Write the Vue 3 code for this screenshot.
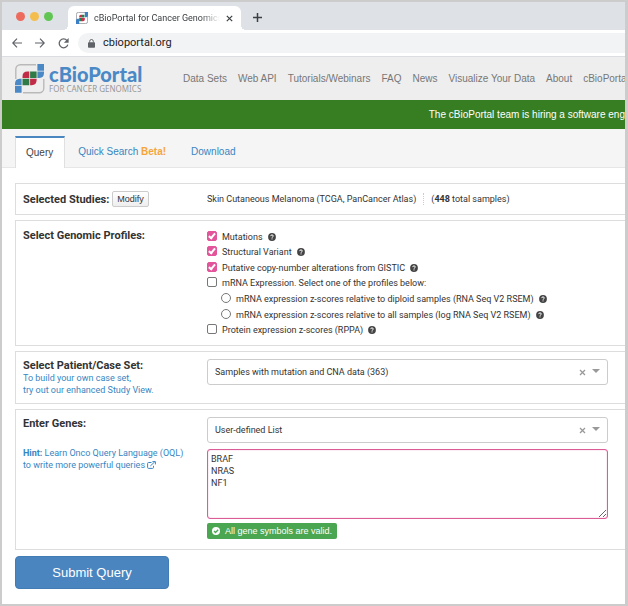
<script setup>
import { ref } from 'vue'

const navLinks = ['Data Sets', 'Web API', 'Tutorials/Webinars', 'FAQ', 'News', 'Visualize Your Data', 'About', 'cBioPortal']

const profiles = ref([
  { id: 'mut', label: 'Mutations', type: 'checkbox', checked: true, help: true },
  { id: 'sv', label: 'Structural Variant', type: 'checkbox', checked: true, help: true },
  { id: 'cna', label: 'Putative copy-number alterations from GISTIC', type: 'checkbox', checked: true, help: true },
  { id: 'mrna', label: 'mRNA Expression. Select one of the profiles below:', type: 'checkbox', checked: false, help: false },
  { id: 'diploid', label: 'mRNA expression z-scores relative to diploid samples (RNA Seq V2 RSEM)', type: 'radio', checked: false, help: true },
  { id: 'all', label: 'mRNA expression z-scores relative to all samples (log RNA Seq V2 RSEM)', type: 'radio', checked: false, help: true },
  { id: 'rppa', label: 'Protein expression z-scores (RPPA)', type: 'checkbox', checked: false, help: true },
])

const caseSet = ref('Samples with mutation and CNA data (363)')
const geneList = ref('User-defined List')
const genes = ref('BRAF\nNRAS\nNF1')
</script>

<template>
  <div class="window">
    <div class="tabstrip">
      <div class="lights"><i class="red"></i><i class="yellow"></i><i class="green"></i></div>
      <div class="browser-tab">
        <svg class="favicon" viewBox="0 0 30 30" aria-hidden="true">
          <rect x="1" y="1" width="28" height="28" rx="5" fill="none" stroke="#8d9196" stroke-width="2" />
          <path d="M22 0h8v9q0 4-4 4h-4zM0 30v-9q0-4 4-4h4v13z" fill="#3b7fc4" />
          <path d="M8 14V11q0-4 4-4h3v7zM15 15h7v4q0 4-4 4h-3z" fill="#c8304a" />
          <path d="M15 7h6v7h-6zM8 15h7v8H8z" fill="#2c7d49" />
        </svg>
        <span class="tab-title">cBioPortal for Cancer Genomics</span>
        <button class="plain" aria-label="Close tab">
          <svg width="7" height="7" viewBox="0 0 7 7"><path d="M.8.8l5.4 5.4M6.2.8L.8 6.2" stroke="#3c4043" stroke-width="1.2" /></svg>
        </button>
      </div>
      <button class="plain new-tab" aria-label="New tab">
        <svg width="9" height="9" viewBox="0 0 9 9"><path d="M4.5 0v9M0 4.5h9" stroke="#3c4043" stroke-width="1.5" /></svg>
      </button>
    </div>

    <div class="toolbar">
      <button class="plain" aria-label="Back">
        <svg width="10" height="10" viewBox="0 0 10 10"><path d="M10 5H1M5 .7L.8 5 5 9.3" fill="none" stroke="#5f6368" stroke-width="1.2" /></svg>
      </button>
      <button class="plain" aria-label="Forward">
        <svg width="10" height="10" viewBox="0 0 10 10"><path d="M0 5h9M5 .7L9.2 5 5 9.3" fill="none" stroke="#5f6368" stroke-width="1.2" /></svg>
      </button>
      <button class="plain" aria-label="Reload">
        <svg width="11" height="11" viewBox="0 0 11 11"><path d="M9 2.6A4.4 4.4 0 1 0 9.8 6.6" fill="none" stroke="#5f6368" stroke-width="1.3" /><path d="M10.6 0v4.7H5.9z" fill="#5f6368" /></svg>
      </button>
      <div class="address">
        <svg width="7" height="9" viewBox="0 0 7 9" aria-hidden="true"><rect y="3.2" width="7" height="5.6" rx=".8" fill="#5f6368" /><path d="M1.7 3.6V2.3a1.8 1.8 0 0 1 3.6 0v1.3" fill="none" stroke="#5f6368" /></svg>
        <span>cbioportal.org</span>
      </div>
    </div>

    <header class="site-header">
      <a class="logo" href="#">
        <svg width="30" height="30" viewBox="0 0 30 30" aria-hidden="true">
          <rect x=".8" y=".8" width="28" height="28" rx="4.5" fill="none" stroke="#b9b9b9" stroke-width="1.4" />
          <path d="M21 0h9v15h-8v8H8v7H0V15h7V7h14z" fill="#eee" />
          <path d="M22.4 0H29v6.8h-6.6zM22.4 7.6H29V9q0 4.8-4.6 5h-2zM0 22v6.8h6.6V22zM0 21.2h6.6v-6.4h-2Q0 15 0 19.8z" fill="#4a89c6" />
          <path d="M7.5 14V12.5q0-4.9 5-4.9H14.3V14zM15.1 14.8h6.5v1.500q0 4.900-5 4.900h-1.500z" fill="#c22b47" />
          <path d="M15.1 7.6h6.5V14h-6.5zM7.5 14.8h6.8v6.4H7.5z" fill="#2f7b48" />
        </svg>
        <span class="logo-text">
          <strong>cBioPortal</strong>
          <small>FOR CANCER GENOMICS</small>
        </span>
      </a>
      <nav>
        <a v-for="link in navLinks" :key="link" href="#">{{ link }}</a>
      </nav>
    </header>

    <div class="banner"><span>The cBioPortal team is hiring a software engineer</span></div>

    <div class="tabs">
      <a class="active" href="#">Query</a>
      <a href="#">Quick Search <b>Beta!</b></a>
      <a href="#">Download</a>
    </div>

    <main>
      <section class="studies">
        <div class="side inline">
          <h2>Selected Studies:</h2>
          <button class="modify">Modify</button>
        </div>
        <div class="content study">
          <span class="study-name">Skin Cutaneous Melanoma (TCGA, PanCancer Atlas)</span>
          <span>(<b>448</b> total samples)</span>
        </div>
      </section>

      <section class="profiles">
        <div class="side"><h2>Select Genomic Profiles:</h2></div>
        <div class="content">
          <div v-for="p in profiles" :key="p.id" class="option" :class="p.type">
            <input :id="p.id" v-model="p.checked" :type="p.type" :value="true" :name="p.type === 'radio' ? 'mrna-profile' : p.id">
            <label :for="p.id">{{ p.label }}</label>
            <svg v-if="p.help" width="8" height="8" viewBox="0 0 8 8" aria-hidden="true">
              <circle cx="4" cy="4" r="3.9" fill="#444" />
              <path d="M2.7 3.1Q2.8 1.9 4 1.9T5.3 3Q5.3 3.6 4.6 3.9 4 4.2 4 4.8M4 5.4v1" fill="none" stroke="#fff" stroke-width="1" />
            </svg>
          </div>
        </div>
      </section>

      <section class="cases">
        <div class="side">
          <h2><label for="case-set">Select Patient/Case Set:</label></h2>
          <a href="#">To build your own case set,<br>try out our enhanced Study View.</a>
        </div>
        <div class="content">
          <div class="dropdown">
            <select id="case-set" v-model="caseSet"><option>Samples with mutation and CNA data (363)</option></select>
            <button class="plain" aria-label="Clear case set">
              <svg width="7" height="7" viewBox="0 0 7 7"><path d="M1 1l5 5M6 1L1 6" stroke="#999" stroke-width="1.3" /></svg>
            </button>
            <svg class="caret" width="8" height="4" viewBox="0 0 8 4" aria-hidden="true"><path d="M0 0h8L4 4z" fill="#999" /></svg>
          </div>
        </div>
      </section>

      <section class="genes">
        <div class="side">
          <h2><label for="genes">Enter Genes:</label></h2>
          <a class="hint" href="#"><b>Hint:</b> Learn Onco Query Language (OQL)<br>to write more powerful queries
            <svg width="9" height="8" viewBox="0 0 9 8" aria-hidden="true"><path d="M4.5 1.5H1.6Q.6 1.5.6 2.5V6.4Q.6 7.4 1.6 7.4H5.5Q6.5 7.4 6.5 6.4V4.8M3.3 5L7.7.9M5.4.6H8.4V3.4" fill="none" stroke="#3786c2" stroke-width="1" /></svg>
          </a>
        </div>
        <div class="content">
          <div class="dropdown">
            <select v-model="geneList" aria-label="Gene list"><option>User-defined List</option></select>
            <button class="plain" aria-label="Clear gene list">
              <svg width="7" height="7" viewBox="0 0 7 7"><path d="M1 1l5 5M6 1L1 6" stroke="#999" stroke-width="1.3" /></svg>
            </button>
            <svg class="caret" width="8" height="4" viewBox="0 0 8 4" aria-hidden="true"><path d="M0 0h8L4 4z" fill="#999" /></svg>
          </div>
          <textarea id="genes" v-model="genes" spellcheck="false"></textarea>
          <div class="valid">
            <svg width="8" height="8" viewBox="0 0 8 8" aria-hidden="true"><circle cx="4" cy="4" r="4" fill="#fff" /><path d="M2 4l1.5 1.5L6.2 2.7" fill="none" stroke="#4aa651" stroke-width="1.3" /></svg>
            <span>All gene symbols are valid.</span>
          </div>
        </div>
      </section>

      <button class="submit">Submit Query</button>
    </main>
  </div>
</template>

<style>
body {
  background: #fff;
}
</style>

<style scoped>
* {
  box-sizing: border-box;
}

.window {
  min-height: 100vh;
  border: 2px solid #ccc;
  border-right-width: 3px;
  overflow: hidden;
  background: #fff;
  color: #333;
  font: 9px/12px Roboto, "Liberation Sans", sans-serif;
  white-space: nowrap;
}

a {
  color: #3786c2;
  text-decoration: none;
}

button,
select,
textarea {
  font-family: inherit;
}

svg {
  flex: none;
}

.plain {
  display: flex;
  padding: 0;
  border: 0;
  background: none;
}

.tabstrip {
  display: flex;
  align-items: flex-end;
  height: 28px;
  background: #dee1e6;
}

.lights {
  display: flex;
  align-items: center;
  gap: 5px;
  height: 28px;
  padding: 0 15px 0 14px;
}

.lights i {
  width: 9px;
  height: 9px;
  border-radius: 50%;
}

.red { background: #ed6a5e; }
.yellow { background: #f4be4f; }
.green { background: #61c554; }

.browser-tab {
  position: relative;
  display: flex;
  align-items: center;
  gap: 6px;
  width: 173px;
  height: 24px;
  padding: 0 8px;
  border-radius: 6px 6px 0 0;
  background: #fff;
}

.browser-tab::before,
.browser-tab::after {
  content: "";
  position: absolute;
  bottom: 0;
  width: 5px;
  height: 5px;
}

.browser-tab::before {
  right: 100%;
  background: radial-gradient(circle at 0 0, transparent 5px, #fff 5px);
}

.browser-tab::after {
  left: 100%;
  background: radial-gradient(circle at 100% 0, transparent 5px, #fff 5px);
}

.favicon {
  width: 12px;
  height: 12px;
}

.tab-title {
  flex: 1;
  overflow: hidden;
  color: #3c4043;
  mask-image: linear-gradient(to right, #000 85%, transparent);
}

.new-tab {
  margin: 0 12px 8px;
}

.toolbar {
  display: flex;
  align-items: center;
  gap: 13px;
  height: 27px;
  padding-left: 10px;
  border-bottom: 1px solid #dcdde0;
}

.address {
  display: flex;
  flex: 1;
  align-items: center;
  gap: 8px;
  height: 20px;
  margin-left: -4px;
  padding-left: 10px;
  border-radius: 10px 0 0 10px;
  background: #f1f3f4;
  color: #202124;
  font-size: 11px;
}

.site-header {
  display: flex;
  align-items: center;
  gap: 40px;
  height: 43px;
  padding-left: 13px;
  background: #eee;
}

.logo {
  display: flex;
  gap: 4px;
}

.logo-text {
  display: flex;
  flex-direction: column;
  width: 94px;
}

.logo-text strong {
  color: #4a89c6;
  font: 900 20px/20px Lato, sans-serif;
}

.logo-text small {
  color: #999;
  font: 8px/10px "Noto Sans", sans-serif;
}

nav {
  display: flex;
  gap: 11px;
}

nav,
.banner,
.tabs {
  font-family: "Liberation Sans", Arial, sans-serif;
  font-size: 10px;
}

nav a {
  color: #777;
}

.banner {
  display: flex;
  align-items: center;
  height: 29px;
  padding-left: 68.5%;
  overflow: hidden;
  background: #377e22;
  color: #fff;
}

.tabs {
  display: flex;
  align-items: flex-end;
  height: 39px;
  padding: 0 13px;
  border-bottom: 1px solid #e6e6e6;
  background: #f5f5f5;
}

.tabs a {
  height: 31px;
  padding: 10px 12px 0 13px;
}

.tabs .active {
  height: 32px;
  margin-bottom: -1px;
  padding: 9px 11px 0 10px;
  border: 1px solid #e0e0e0;
  border-top: 2px solid #4a86c0;
  border-bottom: 0;
  background: #fff;
  color: #444;
}

.tabs b {
  color: #f5a53a;
}

main {
  display: flex;
  flex-direction: column;
  align-items: stretch;
  gap: 5px;
  padding: 15px 0 15px 13px;
}

section {
  display: flex;
  padding-left: 7px;
  border: 1px solid #ddd;
  border-right: 0;
}

.side {
  width: 184px;
  flex: none;
}

.side.inline {
  display: flex;
  align-items: center;
  gap: 3px;
}

.side a {
  display: block;
}

.side .hint {
  margin-top: 17px;
}

.hint svg {
  vertical-align: -1px;
}

h2 {
  margin: 0;
  font-size: 11px;
  font-weight: 700;
  line-height: 13px;
}

.content {
  flex: 1;
  min-width: 0;
  padding-right: 17px;
}

.studies {
  height: 32px;
}

.modify {
  height: 16px;
  padding: 0 4px;
  border: 1px solid #ccc;
  border-radius: 2px;
  background: linear-gradient(#fff, #eee);
  color: #333;
  font-family: "Liberation Sans", Arial, sans-serif;
  font-size: 9px;
}

.study {
  display: flex;
  align-items: center;
}

.study-name {
  margin-right: 7px;
  padding-right: 7px;
  border-right: 1px dotted #ccc;
}

.profiles {
  padding-top: 8px;
  padding-bottom: 7px;
}

.profiles .content {
  display: grid;
  grid-auto-rows: 1fr;
  height: 109px;
}

.option {
  display: grid;
  grid-template-columns: 10px auto auto 1fr;
  column-gap: 5px;
  align-items: center;
}

.option.radio {
  padding-left: 14px;
}

.option input {
  appearance: none;
  width: 10px;
  height: 10px;
  margin: 0 0 2px;
  border: 1px solid #777;
  border-radius: 2px;
  background: #fff;
}

.option input[type="radio"] {
  border-radius: 50%;
}

.option input[type="checkbox"]:checked {
  border-color: #e2559b;
  background: #e2559b;
}

.option input[type="checkbox"]:checked::before {
  content: "";
  display: block;
  box-sizing: border-box;
  width: 4px;
  height: 7px;
  margin: 0 auto;
  border: solid #fff;
  border-width: 0 2px 2px 0;
  transform: rotate(40deg);
}

.cases {
  padding-top: 7px;
  padding-bottom: 7px;
}

.dropdown {
  display: flex;
  align-items: center;
  gap: 6px;
  height: 26px;
  padding-right: 7px;
  border: 1px solid #ccc;
  border-radius: 3px;
}

.dropdown select {
  flex: 1;
  min-width: 0;
  height: 24px;
  padding: 0 7px;
  border: 0;
  appearance: none;
  background: none;
  color: #333;
  font-size: 9px;
}

.caret {
  margin-bottom: 2px;
}

.genes {
  padding-top: 7px;
  padding-bottom: 10px;
}

textarea {
  display: block;
  width: 100%;
  height: 70px;
  margin: 6px 0 4px;
  padding: 3px;
  border: 1px solid #dc5c98;
  border-radius: 3px;
  outline: 0;
  box-shadow: inset 0 0 1px #e2559b;
  color: #333;
  font-size: 9px;
  line-height: 12px;
}

.valid {
  display: flex;
  align-items: center;
  gap: 5px;
  width: fit-content;
  height: 16px;
  padding: 0 5px;
  border-radius: 2px;
  background: #4aa651;
  color: #fff;
  font-family: "Liberation Sans", Arial, sans-serif;
}

.submit {
  align-self: flex-start;
  width: 154px;
  height: 33px;
  margin-top: 1px;
  border: 1px solid #427cb4;
  border-radius: 4px;
  background: #4b85bf;
  color: #fff;
  font-family: "Liberation Sans", Arial, sans-serif;
  font-size: 13px;
}
</style>
